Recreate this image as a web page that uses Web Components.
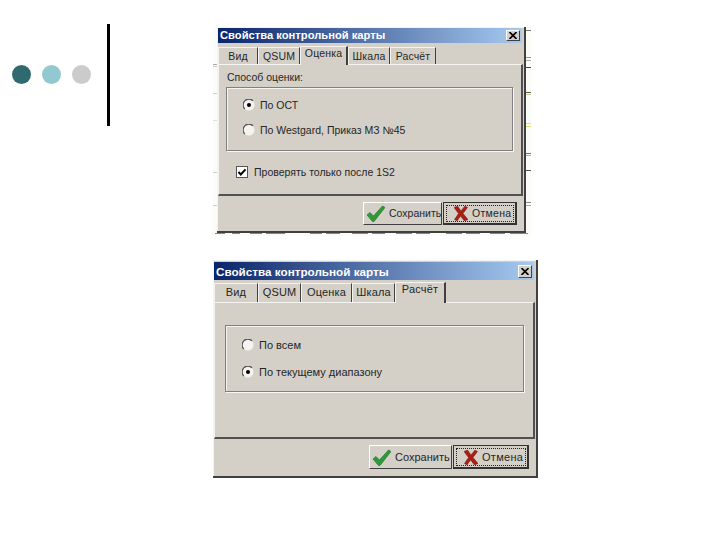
<!DOCTYPE html>
<html>
<head>
<meta charset="utf-8">
<title>Свойства контрольной карты</title>
<style>
  html, body { margin: 0; padding: 0; background: #fff; }
  body { width: 720px; height: 540px; overflow: hidden; font-family: "Liberation Sans", Arial, sans-serif; }
</style>
</head>
<body>
<slide-page>
  <slide-mark slot="mark"></slide-mark>

  <chart-scrap style="left:213px;top:27px"></chart-scrap>

  <win-dialog style="left:217px;top:27px;width:309px;height:206px;--title-top:1px;--title-h:15px;--fs:10.5px;--title-fs:11.2px;--tabs-h:21px;--tab-h:17px;--close-w:14px;--close-h:11px"
    heading="Свойства контрольной карты">
    <win-tabs>
      <win-tab style="width:40px">Вид</win-tab><win-tab style="width:42px">QSUM</win-tab><win-tab active style="width:48px">Оценка</win-tab><win-tab style="width:42px">Шкала</win-tab><win-tab style="width:46px">Расчёт</win-tab>
    </win-tabs>
    <win-panel style="height:132px;padding:5px 8px 0 7px">
      <div style="height:15px;line-height:14px;margin:0 0 2px 1px">Способ оценки:</div>
      <win-group style="height:64px;--pad:10px 0 0 16px;--gap:11px">
        <win-option type="radio" checked>По ОСТ</win-option>
        <win-option type="radio">По Westgard, Приказ МЗ №45</win-option>
      </win-group>
      <win-option type="check" checked style="margin:14px 0 0 10px">Проверять только после 1S2</win-option>
    </win-panel>
    <win-buttons style="padding:6px 7px 0 0">
      <win-button icon="ok" style="width:79px;height:23px">Сохранить</win-button>
      <win-button icon="no" focused style="width:74px;height:23px">Отмена</win-button>
    </win-buttons>
  </win-dialog>

  <win-dialog style="left:213px;top:260px;width:325px;height:218px;--title-top:2px;--title-h:18px;--fs:11px;--title-fs:11.7px;--tabs-h:22px;--tab-h:19px;--close-w:14px;--close-h:13px"
    heading="Свойства контрольной карты">
    <win-tabs>
      <win-tab style="width:44px">Вид</win-tab><win-tab style="width:43px">QSUM</win-tab><win-tab style="width:51px">Оценка</win-tab><win-tab style="width:43px">Шкала</win-tab><win-tab active style="width:51px">Расчёт</win-tab>
    </win-tabs>
    <win-panel style="height:137px;padding:22px 9px 0 10px">
      <win-group style="height:67px;--pad:12px 0 0 16px;--gap:13px">
        <win-option type="radio">По всем</win-option>
        <win-option type="radio" checked>По текущему диапазону</win-option>
      </win-group>
    </win-panel>
    <win-buttons style="padding:6px 7px 0 0">
      <win-button icon="ok" style="width:83px;height:24px">Сохранить</win-button>
      <win-button icon="no" focused style="width:76px;height:24px">Отмена</win-button>
    </win-buttons>
  </win-dialog>
</slide-page>

<script>
/** Shorthand for a shadow root filled from a string. */
function mount(element, html) {
  element.attachShadow({ mode: 'open' }).innerHTML = html
}

class SlidePage extends HTMLElement {
  constructor() {
    super()
    mount(this, `<style>
      :host { display: block; position: relative; width: 720px; height: 540px; background: #fff; overflow: hidden; }
      .mark { padding: 24px 0 0 12px; }
    </style>
    <div class="mark"><slot name="mark"></slot></div>
    <slot></slot>`)
  }
}

/** Three dots and the vertical rule of the slide template. */
class SlideMark extends HTMLElement {
  constructor() {
    super()
    mount(this, `<style>
      :host { display: flex; align-items: center; gap: 11px; width: 98px; height: 102px; }
      i { flex: none; width: 19px; height: 19px; border-radius: 50%; position: relative; top: -1px; }
      b { flex: none; width: 3px; height: 102px; background: #000; margin-left: auto; }
    </style>
    <i style="background:#2f6a70"></i><i style="background:#92c8cf"></i><i style="background:#cbcbcb"></i><b></b>`)
  }
}

/** What shows of the control chart behind the first dialog: ticks at the sides, dashes below. */
class ChartScrap extends HTMLElement {
  constructor() {
    super()
    const rightTicks = [[30, '#777'], [57, '#999'], [60, '#aaa'], [67, '#444'], [92, '#555'], [94, '#c8c48a'], [123, '#dedb70'], [126, '#dedb70'], [153, '#b55'], [155, '#d99'], [170, '#555'], [202, '#888'], [205, '#aaa']]
    const leftTicks = [[64, '#aaa'], [66, '#ccc'], [93, '#ccc'], [120, '#ddd'], [172, '#ccc'], [205, '#ccc']]
    const dashes = [[215, 225], [232, 240], [250, 262], [266, 285], [310, 322], [326, 340], [352, 368], [372, 385], [396, 412], [416, 430], [446, 462], [466, 480], [490, 505], [510, 528]]
    let marks = ''
    for (const [y, color] of rightTicks) marks += `<rect x="313" y="${y - 27}" width="5" height="1" fill="${color}"/>`
    for (const [y, color] of leftTicks) marks += `<rect x="0" y="${y - 27}" width="4" height="1" fill="${color}"/>`
    for (const [from, to] of dashes) marks += `<rect x="${from - 213}" y="206" width="${to - from}" height="1" fill="#7d86a8"/>`
    mount(this, `<style>
      :host { display: block; position: absolute; width: 318px; height: 209px; }
      svg { display: block; }
    </style>
    <svg width="318" height="209" viewBox="0 0 318 209"><rect x="0" width="318" height="209" fill="#fbfbf8"/>${marks}</svg>`)
  }
}

class WinDialog extends HTMLElement {
  constructor() {
    super()
    mount(this, `<style>
      :host {
        display: block; position: absolute; box-sizing: border-box;
        background: #d4d0c8; color: #262626;
        font: var(--fs, 11px)/13px "Liberation Sans", Arial, sans-serif;
        border-right: 2px solid #404040; border-bottom: 2px solid #404040;
        box-shadow: inset 1px 1px 0 #f4f3ef;
      }
      .title {
        display: flex; align-items: center; justify-content: space-between;
        height: var(--title-h, 18px); margin: var(--title-top, 1px) 2px 0 1px; padding: 0 2px 0 2px;
        background: linear-gradient(90deg, #0a246a, #a6caf0);
        color: #fff; font-weight: bold; font-size: var(--title-fs, 12px);
        white-space: nowrap;
      }
      .close {
        flex: none; box-sizing: border-box; width: var(--close-w, 15px); height: var(--close-h, 13px); background: #d4d0c8;
        border: 1px solid; border-color: #fff #404040 #404040 #fff;
        display: flex; align-items: center; justify-content: center;
      }
      .close svg { display: block; }
    </style>
    <div class="title"><span>${this.getAttribute('heading')}</span>
      <span class="close"><svg width="8" height="7" viewBox="0 0 8 7"><path d="M.5 0 7.5 7M7.5 0 .5 7" fill="none" stroke="#000" stroke-width="1.6"/></svg></span>
    </div>
    <slot></slot>`)
  }
}

class WinTabs extends HTMLElement {
  constructor() {
    super()
    mount(this, `<style>
      :host { display: flex; align-items: flex-end; height: var(--tabs-h, 21px); padding-left: 1px; }
    </style><slot></slot>`)
  }
}

class WinTab extends HTMLElement {
  constructor() {
    super()
    mount(this, `<style>
      :host {
        display: block; flex: none; box-sizing: border-box; height: var(--tab-h, 17px); padding-top: 2px;
        border-top: 1px solid #f4f3ef; border-left: 1px solid #f4f3ef; border-right: 1px solid #404040;
        white-space: nowrap; text-align: center; overflow: hidden; letter-spacing: .15px;
      }
      :host([active]) {
        height: calc(var(--tab-h, 17px) + 2px); position: relative; top: 1px;
        padding-top: 0; background: #d4d0c8; z-index: 1; border-right-width: 2px;
      }
    </style><slot></slot>`)
  }
}

class WinPanel extends HTMLElement {
  constructor() {
    super()
    mount(this, `<style>
      :host {
        display: block; box-sizing: border-box; margin: 0 1px 0 1px;
        border-top: 1px solid #f4f3ef; border-left: 1px solid #f4f3ef;
        border-right: 2px solid #505050; border-bottom: 2px solid #505050;
      }
    </style><slot></slot>`)
  }
}

class WinGroup extends HTMLElement {
  constructor() {
    super()
    mount(this, `<style>
      :host {
        display: flex; flex-direction: column; gap: var(--gap, 10px); box-sizing: border-box;
        padding: var(--pad, 8px 0 0 20px); border: 1px solid #808080;
        box-shadow: inset 1px 1px 0 #f4f3ef, 1px 1px 0 #f8f7f4;
      }
    </style><slot></slot>`)
  }
}

class WinOption extends HTMLElement {
  constructor() {
    super()
    const checked = this.hasAttribute('checked')
    const mark = this.getAttribute('type') == 'check'
      ? `<svg width="12" height="12" viewBox="0 0 12 12"><rect x=".5" y=".5" width="11" height="11" fill="#fff" stroke="#555"/>${checked ? '<path d="M2.5 6 4.8 8.5 9.5 3.3" fill="none" stroke="#000" stroke-width="2"/>' : ''}</svg>`
      : `<svg width="12" height="12" viewBox="0 0 12 12"><circle cx="6" cy="6" r="5.5" fill="#f4f3ef"/><path d="M1.8 10A5.5 5.5 0 0 1 10 1.8" fill="none" stroke="#555" stroke-width="1.2"/>${checked ? '<circle cx="6" cy="6" r="2" fill="#000"/>' : ''}</svg>`
    const gap = this.getAttribute('type') == 'check' ? 6 : 5
    mount(this, `<style>
      :host { display: flex; align-items: center; gap: ${gap}px; height: 14px; white-space: nowrap; }
      svg { flex: none; display: block; }
    </style>${mark}<span><slot></slot></span>`)
  }
}

class WinButtons extends HTMLElement {
  constructor() {
    super()
    mount(this, `<style>
      :host { display: flex; justify-content: flex-end; gap: 1px; }
    </style><slot></slot>`)
  }
}

class WinButton extends HTMLElement {
  constructor() {
    super()
    const icon = this.getAttribute('icon') == 'ok'
      ? '<svg width="18" height="17" viewBox="0 0 18 17"><path d="M0 10 3 7.5 6.5 11 15.5 1 18 2.5 7 16.5 5.5 16.5Z" fill="#2f9a3a" stroke="#1d6b1d" stroke-width=".6"/></svg>'
      : '<svg width="14" height="15" viewBox="0 0 14 15"><path d="M0 1.5 3.5 0 7 5 11 0 13.5 1.5 9 7.5 14 13.5 10.5 15 6.5 10 3 15 .5 13.5 4.5 7.5Z" fill="#a81f14" stroke="#7c130c" stroke-width=".5"/></svg>'
    mount(this, `<style>
      :host {
        display: flex; align-items: center; gap: 4px; box-sizing: border-box; padding-left: 3px;
        flex: none; background: #d4d0c8; white-space: nowrap;
        border: 1px solid; border-color: #fff #404040 #404040 #fff;
      }
      :host([focused]) {
        padding-left: 10px; border: 1px solid #333; box-shadow: inset -1px -1px 0 #333;
        outline: 1px dotted #222; outline-offset: -4px; letter-spacing: .3px;
      }
      svg { flex: none; display: block; }
    </style>${icon}<span><slot></slot></span>`)
  }
}

customElements.define('slide-page', SlidePage)
customElements.define('slide-mark', SlideMark)
customElements.define('chart-scrap', ChartScrap)
customElements.define('win-dialog', WinDialog)
customElements.define('win-tabs', WinTabs)
customElements.define('win-tab', WinTab)
customElements.define('win-panel', WinPanel)
customElements.define('win-group', WinGroup)
customElements.define('win-option', WinOption)
customElements.define('win-buttons', WinButtons)
customElements.define('win-button', WinButton)
</script>
</body>
</html>
